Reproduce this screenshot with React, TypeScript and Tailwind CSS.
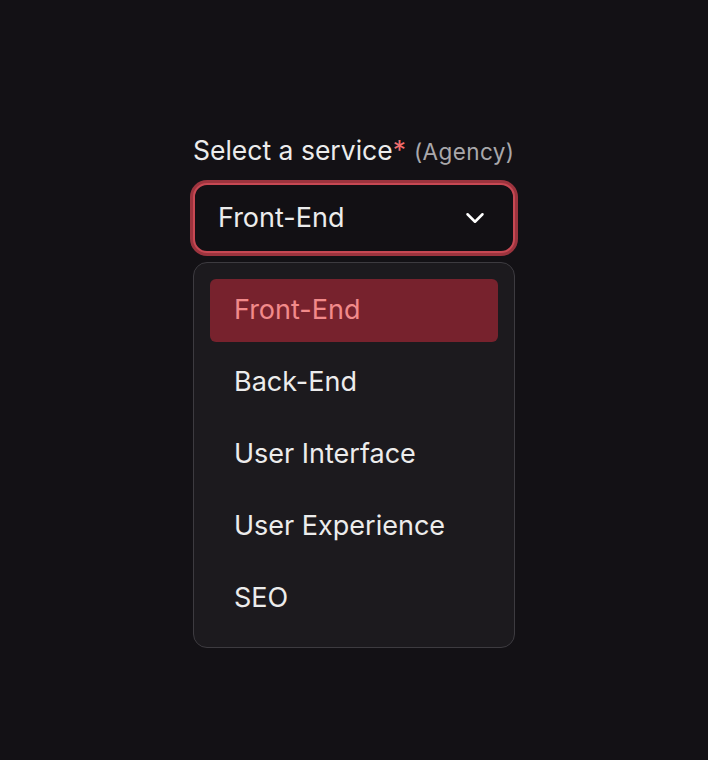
import { ChevronDown } from "lucide-react";

const services = ["Front-End", "Back-End", "User Interface", "User Experience", "SEO"];

export default function App() {
  const selected = "Front-End";
  return (
    <div className="flex min-h-[760px] justify-center bg-[#131115] pt-[134px] font-['Inter',sans-serif] antialiased">
      <div className="flex w-[322px] flex-col">
        <label className="flex items-baseline text-[26.5px] leading-[32px] text-[#ececec]">
          Select a service
          <span className="text-[#f26d6d]">*</span>
          <span className="ml-[8px] text-[22.5px] tracking-[0.4px] text-[#a9a8ab]">(Agency)</span>
        </label>

        <button
          type="button"
          className="mt-[15px] flex h-[70px] w-full items-center justify-between rounded-[14px] border-2 border-[#c74853] bg-[#121014] pr-[23px] pl-[23px] text-left text-[27px] text-[#ececec] ring-[3px] ring-[#9c343e]"
        >
          <span>{selected}</span>
          <ChevronDown size={30} strokeWidth={2} className="text-white" />
        </button>

        <ul className="mt-[9px] flex flex-col gap-[9px] rounded-[14px] border border-[#3d3b40] bg-[#1c1a1e] p-4 pb-[17px]">
          {services.map((s) => (
            <li
              key={s}
              className={
                s === selected
                  ? "flex h-[63px] items-center rounded-[6px] bg-[#77222d] pl-6 text-[27px] text-[#f28a8a]"
                  : "flex h-[63px] items-center rounded-[6px] pl-6 text-[27px] text-[#ececec]"
              }
            >
              {s}
            </li>
          ))}
        </ul>
      </div>
    </div>
  );
}
